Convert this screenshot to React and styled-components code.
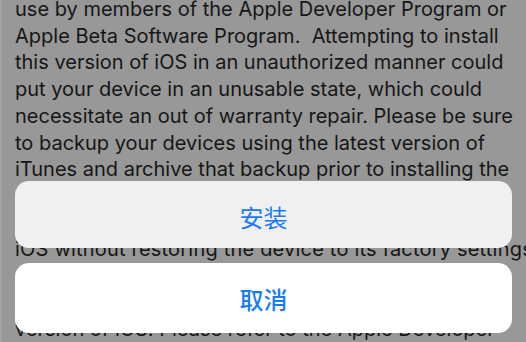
import React from "react"
import styled, { createGlobalStyle } from "styled-components"

const GlobalStyle = createGlobalStyle`
  html, body {
    margin: 0;
    padding: 0;
    background: #999999;
  }
`

const lines = [
  "use by members of the Apple Developer Program or",
  "Apple Beta Software Program.  Attempting to install",
  "this version of iOS in an unauthorized manner could",
  "put your device in an unusable state, which could",
  "necessitate an out of warranty repair. Please be sure",
  "to backup your devices using the latest version of",
  "iTunes and archive that backup prior to installing the",
  "beta version of iOS. Devices updated to beta",
  "versions of iOS cannot be restored to a public",
  "iOS without restoring the device to its factory settings",
  "and then restoring from an earlier backup. To",
  "return to a public release, restore to a public",
  "version of iOS. Please refer to the Apple Developer",
]

const Screen = styled.div`
  position: relative;
  width: 526px;
  height: 342px;
  overflow: hidden;
  box-sizing: border-box;
  border-left: 2px solid #a2a2a2;
  background: #989898;
`

const Document = styled.div`
  padding: 0 0 0 13px;
  margin-top: -4px;
  font-family: Inter, "Liberation Sans", sans-serif;
  font-size: 20px;
  line-height: 26.7px;
  color: #161616;
`

const Line = styled.div`
  white-space: pre;
  letter-spacing: ${(p) => (p.$wide ? "0.2px" : "0")};
`

const SheetStack = styled.div`
  position: absolute;
  top: 181px;
  left: 13px;
  width: 497px;
  display: flex;
  flex-direction: column;
  gap: 15px;
`

const SheetButton = styled.div`
  height: ${(p) => (p.$cancel ? "70px" : "67px")};
  padding-top: ${(p) => (p.$cancel ? "0" : "3px")};
  box-sizing: border-box;
  border-radius: 14px;
  background: ${(p) => (p.$cancel ? "#ffffff" : "#f0f0f0")};
  display: flex;
  align-items: center;
  justify-content: center;
  font-family: "Noto Sans CJK SC", sans-serif;
  font-size: 24px;
  font-weight: ${(p) => (p.$cancel ? 500 : 400)};
  color: #1a7cf5;
`

export default function App() {
  return (
    <>
      <GlobalStyle />
      <Screen>
        <Document>
          {lines.map((t, i) => (
            <Line key={i} $wide={i === 9}>
              {t}
            </Line>
          ))}
        </Document>
        <SheetStack>
          <SheetButton>安装</SheetButton>
          <SheetButton $cancel>取消</SheetButton>
        </SheetStack>
      </Screen>
    </>
  )
}
